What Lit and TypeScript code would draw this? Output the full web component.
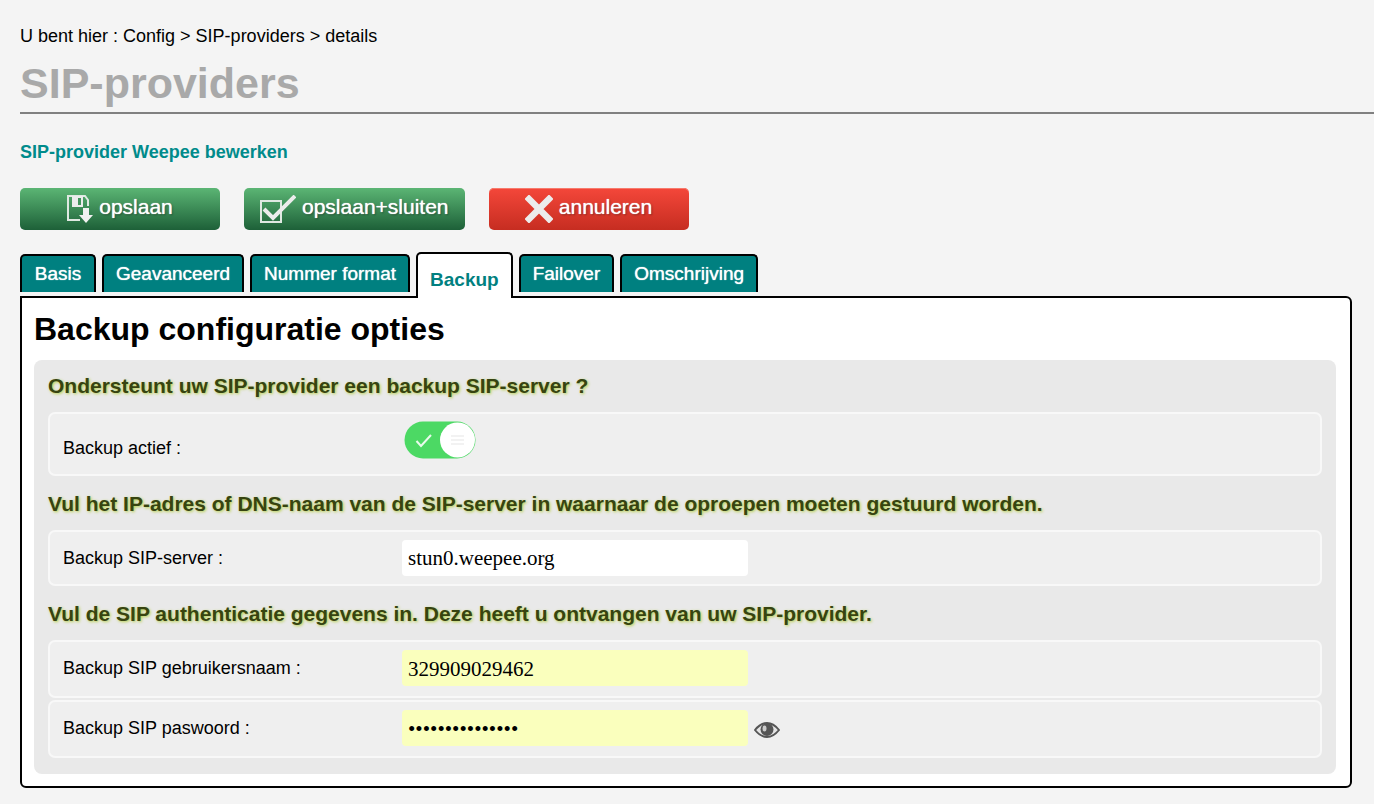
import { LitElement, html, css, svg, nothing } from "lit";
import { customElement, state } from "lit/decorators.js";
import { classMap } from "lit/directives/class-map.js";

const saveIcon = svg`
  <svg class="icon" width="26" height="28" viewBox="0 0 26 28" aria-hidden="true">
    <path d="M13 25H1V1h17l3 4v6" fill="none" stroke="#dfe9e2" stroke-width="2"/>
    <path d="M5 1h11v11H5z" fill="#ececec"/>
    <path d="M11 3h3v7h-3z" fill="#43945c"/>
    <path d="M16 13h6v7h4l-7 8-7-8h4z" fill="#f2f2f2"/>
  </svg>`;

const checkIcon = svg`
  <svg class="icon" width="36" height="28" viewBox="0 0 36 28" aria-hidden="true">
    <rect x="1" y="6" width="20" height="21" fill="none" stroke="#dfe9e2" stroke-width="2"/>
    <path d="M4 14l9 9L35 1" fill="none" stroke="#ececec" stroke-width="4"/>
  </svg>`;

const crossIcon = svg`
  <svg class="icon" width="28" height="28" viewBox="0 0 28 28" aria-hidden="true">
    <path d="M4 4l20 20M24 4L4 24" fill="none" stroke="#ececec" stroke-width="6.500" stroke-linecap="square"/>
  </svg>`;

const eyeIcon = svg`
  <svg class="eye" width="26" height="16" viewBox="0 0 26 16" aria-hidden="true">
    <path d="M1 8C5 3 9 1 13 1s8 2 12 7c-4 5-8 7-12 7S5 13 1 8z" fill="#e4e4e4" stroke="#555" stroke-width="2"/>
    <circle cx="13" cy="7.500" r="6.500" fill="#555"/>
    <ellipse cx="10.500" cy="6.500" rx="2" ry="3" fill="#ccc"/>
  </svg>`;

const tabs = ["Basis", "Geavanceerd", "Nummer format", "Backup", "Failover", "Omschrijving"];

@customElement("app-root")
export class AppRoot extends LitElement {
  @state() private active = "Backup";
  @state() private backup = true;
  @state() private reveal = false;

  static styles = css`
    :host {
      display: block;
      box-sizing: border-box;
      min-height: 100vh;
      padding: 24px 0 16px 20px;
      background: #f4f4f4;
      color: #000;
      font: 18px/24px "Liberation Sans", Arial, sans-serif;
    }
    *, *::before { box-sizing: border-box; }
    button, input { font: inherit; }
    .crumbs a { color: inherit; text-decoration: none; }
    .title {
      margin: 0;
      padding: 10px 0 4px;
      border-bottom: 2px solid #808080;
      color: #a9a9a9;
      font-size: 43px;
      line-height: 50px;
    }
    .subtitle {
      margin: 26px 0 24px;
      color: #008b8b;
      font-size: 18px;
      line-height: 24px;
    }
    .actions { display: flex; flex-wrap: wrap; gap: 24px; }
    .action {
      display: flex;
      align-items: center;
      justify-content: center;
      gap: 6px;
      min-width: 200px;
      height: 42px;
      padding: 0 16px;
      border: 0;
      border-radius: 5px;
      background: linear-gradient(#5bb574, #1d6038);
      color: #fff;
      font-size: 21px;
      text-shadow: 0 0 1px #fff, 1px 1px 2px rgba(0, 0, 0, 0.4);
      cursor: pointer;
    }
    .action span { padding-bottom: 4px; }
    .cancel {
      background: linear-gradient(#f4473a, #c62d21);
      box-shadow: inset 0 1px 0 #f77a6c;
    }
    .icon, .eye { display: block; flex: none; }
    .tabs {
      display: flex;
      position: relative;
      gap: 6px;
      margin: 22px 0 -2px;
    }
    .tab {
      min-width: 76px;
      height: 38px;
      margin-top: 2px;
      padding: 0 12px;
      border: 2px solid #000;
      border-bottom: 0;
      border-radius: 5px 5px 0 0;
      background: #008080;
      color: #fff;
      font-size: 19px;
      text-shadow: 0 0 1px #fff;
      cursor: pointer;
    }
    .tab.on {
      height: 46px;
      margin-top: 0;
      padding-top: 8px;
      background: #fff;
      color: #008080;
      font-weight: bold;
      text-shadow: none;
    }
    .panel {
      margin-right: 22px;
      padding: 0 14px 12px 12px;
      border: 2px solid #000;
      border-radius: 0 6px 6px 6px;
      background: #fff;
    }
    .heading { margin: 0; font-size: 32px; line-height: 62px; }
    .box {
      padding: 0 14px 14px;
      border-radius: 8px;
      background: #e9e9e9;
    }
    .question {
      margin: 0;
      color: #374410;
      font-size: 21px;
      line-height: 52px;
      text-shadow: 1px 1px 3px #b5cf45;
    }
    .row {
      display: grid;
      grid-template-columns: minmax(0, 339px) minmax(0, 1fr);
      align-items: center;
      margin-bottom: 2px;
      padding: 8px 13px;
      border: 2px solid #f8f8f8;
      border-radius: 7px;
      background: #efefef;
    }
    .tall { padding-bottom: 10px; }
    .switchrow { height: 64px; padding: 7px 13px 0; }
    .control { display: flex; align-items: center; gap: 6px; }
    .switchrow .control { align-self: start; }
    .text {
      width: 346px;
      height: 36px;
      padding: 0 6px;
      border: 0;
      border-radius: 4px;
      background: #fff;
      color: #000;
      font: 21px "Liberation Serif", "Times New Roman", serif;
      outline: 0;
    }
    .filled { padding-top: 3px; background: #faffbd; }
    .peek { padding: 3px 0 0; border: 0; background: none; cursor: pointer; }
    .switch { display: grid; margin-left: 2px; cursor: pointer; }
    .switch > * { grid-area: 1 / 1; }
    .switch input { width: 72px; height: 38px; margin: 0; opacity: 0; }
    .switch svg { display: block; pointer-events: none; }
  `;

  private textRow(id: string, label: string, value: string, cls: string, password = false) {
    return html`
      <div class="row ${cls}">
        <label for=${id}>${label}</label>
        <div class="control">
          <input
            class=${classMap({ text: true, filled: cls === "tall" })}
            id=${id}
            type=${password && !this.reveal ? "password" : "text"}
            .value=${value}
          />
          ${password
            ? html`<button class="peek" type="button" aria-label="Toon paswoord"
                @click=${() => (this.reveal = !this.reveal)}>${eyeIcon}</button>`
            : nothing}
        </div>
      </div>`;
  }

  render() {
    return html`
      <nav class="crumbs">U bent hier : <a href="#config">Config</a> &gt; <a href="#sip">SIP-providers</a> &gt; details</nav>
      <h1 class="title">SIP-providers</h1>
      <h2 class="subtitle">SIP-provider Weepee bewerken</h2>
      <div class="actions">
        <button class="action" type="button">${saveIcon}<span>opslaan</span></button>
        <button class="action" type="button">${checkIcon}<span>opslaan+sluiten</span></button>
        <button class="action cancel" type="button">${crossIcon}<span>annuleren</span></button>
      </div>
      <div class="tabs" role="tablist">
        ${tabs.map(
          (t) => html`<button type="button" role="tab" aria-selected=${t === this.active}
            class=${classMap({ tab: true, on: t === this.active })}
            @click=${() => (this.active = t)}>${t}</button>`
        )}
      </div>
      <main class="panel">
        <h2 class="heading">Backup configuratie opties</h2>
        <div class="box">
          <h3 class="question">Ondersteunt uw SIP-provider een backup SIP-server ?</h3>
          <div class="row switchrow">
            <label for="active">Backup actief :</label>
            <div class="control">
              <span class="switch">
                <input id="active" type="checkbox" .checked=${this.backup}
                  @change=${() => (this.backup = !this.backup)} />
                <svg width="72" height="38" viewBox="0 0 72 38" aria-hidden="true">
                  <rect x="0.500" y="0.500" width="71" height="37" rx="18.500" fill=${this.backup ? "#4cd964" : "#ccc"}/>
                  <path d="M12.500 20l4.500 5L27 14" fill="none" stroke="#e9fbec" stroke-width="2"/>
                  <circle cx=${this.backup ? 53.5 : 18.5} cy="19" r="17.500" fill="#fff"/>
                  <path d="M47 15h13M47 19h13M47 23h13" stroke="#eee" stroke-width="1.500"/>
                </svg>
              </span>
            </div>
          </div>
          <h3 class="question">Vul het IP-adres of DNS-naam van de SIP-server in waarnaar de oproepen moeten gestuurd worden.</h3>
          ${this.textRow("server", "Backup SIP-server :", "stun0.weepee.org", "")}
          <h3 class="question">Vul de SIP authenticatie gegevens in. Deze heeft u ontvangen van uw SIP-provider.</h3>
          ${this.textRow("user", "Backup SIP gebruikersnaam :", "329909029462", "tall")}
          ${this.textRow("pass", "Backup SIP paswoord :", "weepee-backup-1", "tall", true)}
        </div>
      </main>
    `;
  }
}
